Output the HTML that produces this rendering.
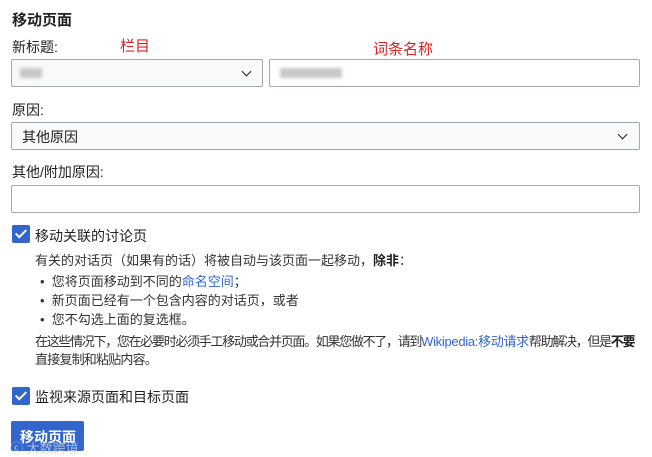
<!DOCTYPE html>
<html><head><meta charset="utf-8"><style>
body{margin:0;width:652px;height:456px;background:#fff;font-family:"Liberation Sans","Noto Sans CJK SC",sans-serif;color:#202122;position:relative;overflow:hidden}
.a{position:absolute;white-space:nowrap}
.box{position:absolute;border:1px solid #a2a9b1;border-radius:2px;box-sizing:border-box}
.sel{background:#f8f9fa}
.chev{position:absolute;width:6px;height:6px;border-right:1.6px solid #202122;border-bottom:1.6px solid #202122;transform:rotate(45deg)}
.cb{position:absolute;width:18px;height:18px;background:#36c;border-radius:2px}
.cb:after{content:"";position:absolute;left:6px;top:2px;width:4px;height:9px;border-right:2px solid #fff;border-bottom:2px solid #fff;transform:rotate(45deg)}
.blur{position:absolute;height:10px;background:#c8c8c8;filter:blur(1.5px)}
a{color:#36c;text-decoration:none}
.s{font-size:13px;color:#333}
</style></head><body>
<div class="a" style="left:12px;top:9px;font-size:15px;font-weight:bold">移动页面</div>
<div class="a" style="left:12px;top:37px;font-size:14px">新标题:</div>
<div class="a" style="left:120px;top:35px;font-size:15px;color:#e02020">栏目</div>
<div class="a" style="left:373px;top:38px;font-size:15px;color:#e02020">词条名称</div>
<div class="box sel" style="left:11px;top:59px;width:252px;height:28px"></div>
<div class="blur" style="left:20px;top:68px;width:22px"></div>
<div class="chev" style="left:243px;top:68px"></div>
<div class="box" style="left:269px;top:59px;width:371px;height:28px"></div>
<div class="blur" style="left:280px;top:68px;width:62px"></div>
<div class="a" style="left:12px;top:100px;font-size:14px">原因:</div>
<div class="box sel" style="left:11px;top:122px;width:629px;height:28px"></div>
<div class="a" style="left:22px;top:127px;font-size:14px">其他原因</div>
<div class="chev" style="left:619px;top:131px"></div>
<div class="a" style="left:12px;top:162px;font-size:14px">其他/附加原因:</div>
<div class="box" style="left:11px;top:185px;width:629px;height:28px"></div>
<div class="cb" style="left:12px;top:225px"></div>
<div class="a" style="left:35px;top:226px;font-size:14px">移动关联的讨论页</div>
<div class="a s" style="left:35px;top:250px">有关的对话页（如果有的话）将被自动与该页面一起移动，<b style="color:#202122">除非</b>：</div>
<div class="a s" style="left:40px;top:271px">•&nbsp;&nbsp;您将页面移动到不同的<a>命名空间</a>；</div>
<div class="a s" style="left:40px;top:290px">•&nbsp;&nbsp;新页面已经有一个包含内容的对话页，或者</div>
<div class="a s" style="left:40px;top:309px">•&nbsp;&nbsp;您不勾选上面的复选框。</div>
<div class="a s" style="left:35px;top:331px;letter-spacing:-1.3px">在这些情况下，您在必要时必须手工移动或合并页面。如果您做不了，请到<a style="letter-spacing:-0.3px">Wikipedia:移动请求</a>帮助解决，但是<b style="color:#202122">不要</b></div>
<div class="a s" style="left:35px;top:349px;letter-spacing:-0.8px">直接复制和粘贴内容。</div>
<div class="cb" style="left:12px;top:387px"></div>
<div class="a" style="left:35px;top:387px;font-size:14px">监视来源页面和目标页面</div>
<div class="a" style="left:11px;top:421px;width:73px;height:30px;background:#36c;border-radius:2px"></div>
<div class="a" style="left:20px;top:427px;font-size:14px;font-weight:bold;color:#fff">移动页面</div>
<div class="a" style="left:10px;top:438px;font-size:13px;color:rgba(200,210,230,.8)">ⓒ 大数跨境</div>
</body></html>
